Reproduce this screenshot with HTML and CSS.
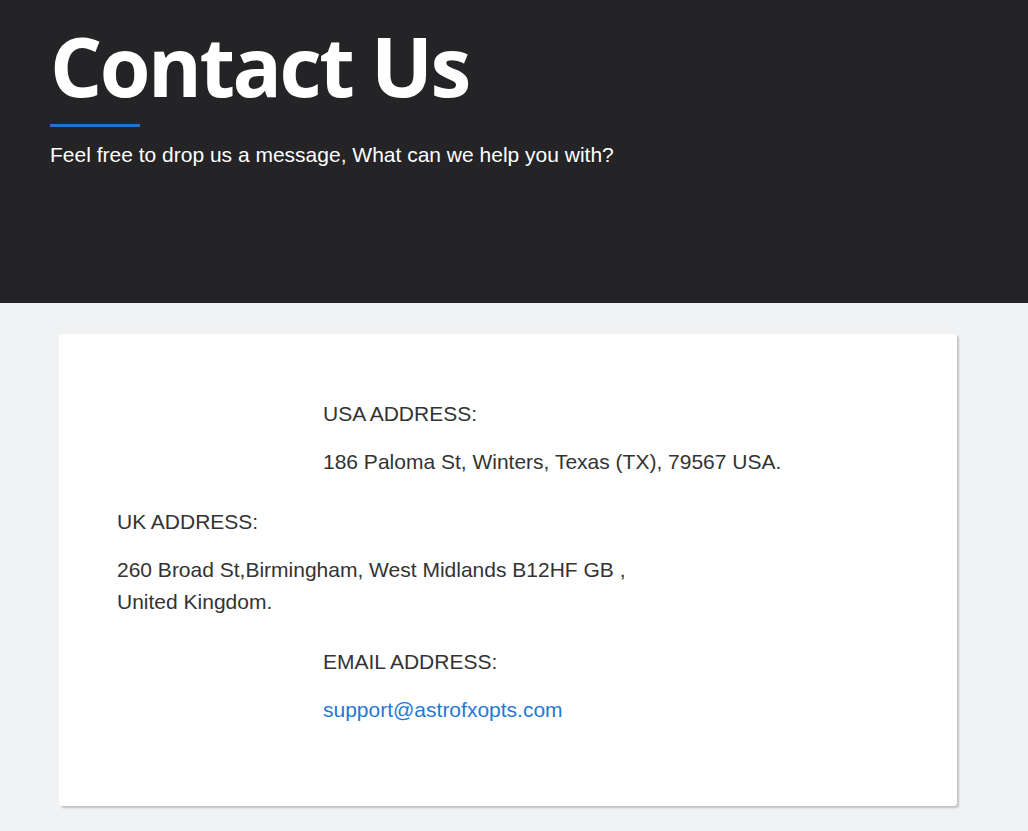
FILE: index.html
```html
<!DOCTYPE html>
<html lang="en">
<head>
    <meta charset="UTF-8">
    <meta name="viewport" content="width=device-width, initial-scale=1.0">
    <title>Contact Us</title>
    <link rel="stylesheet" href="styles.css">
</head>
<body>
    <header class="hero">
        <h1>Contact Us</h1>
        <div class="hero-line"></div>
        <p class="hero-sub">Feel free to drop us a message, What can we help you with?</p>
    </header>

    <main class="content">
        <div class="card">
            <div class="block shifted">
                <p class="label">USA ADDRESS:</p>
                <p class="value">186 Paloma St, Winters, Texas (TX), 79567 USA.</p>
            </div>
            <div class="block">
                <p class="label">UK ADDRESS:</p>
                <p class="value">260 Broad St,Birmingham, West Midlands B12HF GB ,<br>United Kingdom.</p>
            </div>
            <div class="block shifted">
                <p class="label">EMAIL ADDRESS:</p>
                <p class="value"><a href="mailto:support@astrofxopts.com">support@astrofxopts.com</a></p>
            </div>
        </div>
    </main>
</body>
</html>
```

FILE: styles.css
```css
body {
    margin: 0;
    font-family: "Liberation Sans", Arial, sans-serif;
    background-color: #f1f2f4;
    color: #333;
}
.hero {
    background-color: #242426;
    height: 303px;
    box-sizing: border-box;
    padding: 16px 50px 0;
}
.hero h1 {
    margin: 0;
    font-family: "Open Sans", sans-serif;
    font-weight: 700;
    font-size: 82px;
    line-height: 98px;
    letter-spacing: -2.5px;
    color: #fff;
}
.hero-line {
    width: 90px;
    height: 3px;
    background-color: #1e73d1;
    margin-top: 10px;
}
.hero-sub {
    margin: 16px 0 0;
    color: #fff;
    font-size: 21px;
    line-height: 24px;
}
.content {
    padding: 31px 71px 26px 59px;
}
.card {
    background-color: #fff;
    border-radius: 3px;
    box-shadow: 2px 2px 2px rgba(0, 0, 0, 0.2);
    padding: 64px 58px 52px;
}
.block {
    margin-bottom: 28px;
}
.block.shifted {
    margin-left: 206px;
}
.label,
.value {
    margin: 0;
    font-size: 21px;
    line-height: 32px;
    color: #333;
}
.label {
    margin-bottom: 16px;
}
.value a {
    color: #1f78d9;
    text-decoration: none;
}
```
